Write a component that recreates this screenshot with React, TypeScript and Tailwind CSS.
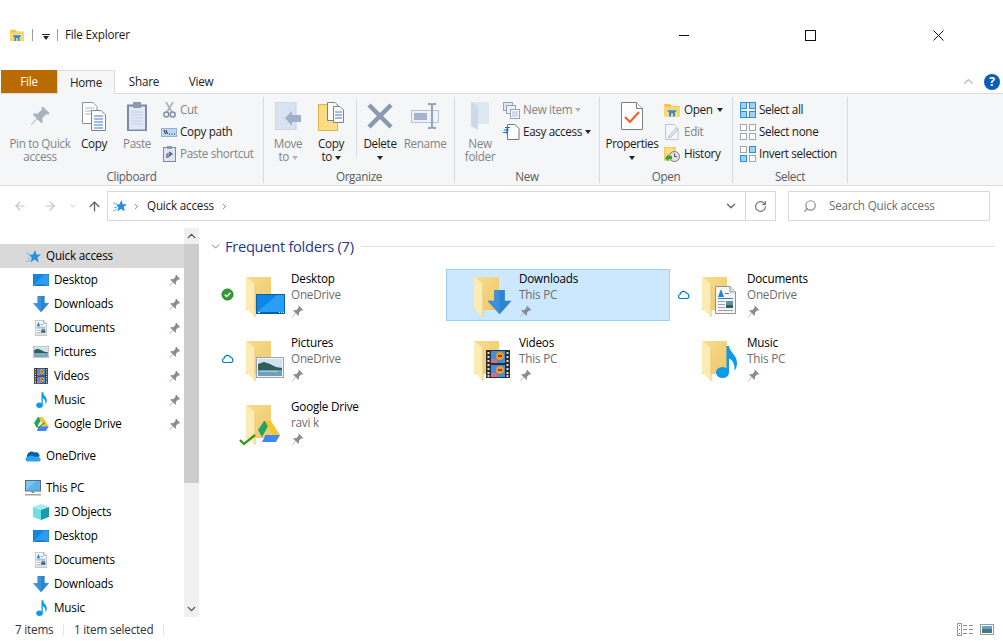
import React from "react";
import { ChevronDown, ChevronUp, RotateCw, Search, ArrowLeft, ArrowRight, ArrowUp } from "lucide-react";

type G = React.SVGProps<SVGSVGElement>;

const Pin = (p: G) => (
  <svg viewBox="0 0 16 16" {...p}>
    <path d="M10 1 L15 6 L14 7 L12.7 6.6 L9.6 9.7 L10 12.2 L9 13.2 L6.1 10.3 L1.6 14.8 L1.2 14.4 L5.7 9.9 L2.8 7 L3.8 6 L6.3 6.4 L9.4 3.3 L9 2 Z" fill={p.fill || "#878d93"} />
  </svg>
);

const Desktop = (p: G) => (
  <svg viewBox="0 0 29 20" preserveAspectRatio="none" {...p}>
    <rect x="0.5" y="0.5" width="28" height="19" fill="#0f86e6" stroke="#0b5fa8" />
    <polygon points="1,18 21,1 28,1 28,18" fill="#2a9df4" />
    <rect x="1" y="18" width="27" height="1" fill="#0b5fa8" />
    <rect x="2" y="18" width="2" height="1" fill="#fff" />
    <rect x="23" y="18" width="1" height="1" fill="#fff" />
    <rect x="25" y="18" width="1" height="1" fill="#fff" />
    <rect x="27" y="18" width="1" height="1" fill="#fff" />
  </svg>
);

const DownArrow = (p: G) => (
  <svg viewBox="0 0 23 24" {...p}>
    <path d="M6.5 0 H16.5 V11 H23 L11.5 24 L0 11 H6.5 Z" fill="#3a92de" stroke="#2a78c0" strokeWidth="0.5" />
    <path d="M11.5 0 H16.5 V11 H23 L11.5 24 Z" fill="#2f84d2" />
  </svg>
);

const Doc = (p: G) => (
  <svg viewBox="0 0 21 28" {...p}>
    <path d="M0.5 0.5 H15 L20.5 6 V27.5 H0.5 Z" fill="#f6f6f6" stroke="#8f9396" />
    <path d="M15 0.5 V6 H20.5" fill="#e2e2e2" stroke="#8f9396" />
    <polygon points="3,11 6,3 9,11" fill="#2a7fd0" />
    <rect x="10" y="7" width="4" height="1" fill="#2a7fd0" />
    <rect x="3" y="12" width="15" height="1" fill="#2a7fd0" />
    <rect x="3" y="15" width="7" height="1" fill="#9aa0a6" />
    <rect x="3" y="18" width="7" height="1" fill="#9aa0a6" />
    <rect x="3" y="21" width="7" height="1" fill="#9aa0a6" />
    <rect x="3" y="24" width="15" height="1" fill="#9aa0a6" />
    <rect x="11" y="15" width="7" height="7" fill="#6c8aa3" />
    <rect x="11" y="19" width="7" height="3" fill="#2f5f5f" />
  </svg>
);

const Picture = (p: G) => (
  <svg viewBox="0 0 28 21" preserveAspectRatio="none" {...p}>
    <rect x="0.5" y="0.5" width="27" height="20" fill="#f4f4f4" stroke="#a3a3a3" />
    <rect x="2" y="2" width="24" height="17" fill="#cfe2f2" />
    <path d="M2 7 L8 5 L14 7 L20 10 L26 11 V13 H2 Z" fill="#2f5f55" />
    <rect x="2" y="13" width="24" height="6" fill="#6f9fc0" />
    <rect x="4" y="14" width="18" height="1" fill="#b3cbdb" />
  </svg>
);

const Film = (p: G) => (
  <svg viewBox="0 0 24 28" {...p}>
    <rect width="24" height="28" fill="#2e2e2e" />
    <rect x="5" y="1" width="14" height="12" fill="#3f8fe0" />
    <rect x="5" y="15" width="14" height="12" fill="#3f8fe0" />
    <circle cx="14" cy="6" r="4" fill="#e8a020" />
    <rect x="12" y="5" width="4" height="2" fill="#b33030" />
    <rect x="5" y="9" width="6" height="4" fill="#d86a9a" />
    <circle cx="14" cy="20" r="4" fill="#e8a020" />
    <rect x="12" y="19" width="4" height="2" fill="#b33030" />
    <rect x="5" y="23" width="6" height="4" fill="#d86a9a" />
    {[2, 6, 10, 14, 18, 22, 25].map((y) => (
      <g key={y}>
        <rect x="1.5" y={y} width="2" height="2" fill="#ddd" />
        <rect x="20.5" y={y} width="2" height="2" fill="#ddd" />
      </g>
    ))}
  </svg>
);

const Note = (p: G) => (
  <svg viewBox="0 0 21 32" {...p}>
    <ellipse cx="6.5" cy="26.5" rx="6.5" ry="5.5" fill="#0a9bea" />
    <path d="M10.5 0 H13 C13.5 6 21 9 21 17 C21 20 20 23 18.5 25 C19 19 17 14 13 12.5 V26 H10.5 Z" fill="#0a9bea" />
  </svg>
);

const Drive = (p: G) => (
  <svg viewBox="0 0 23 21" {...p}>
    <polygon points="7,0 14,0 5,16 1,9" fill="#1fa463" />
    <polygon points="14,0 23,14 15,14 8,0" fill="#f7c52f" />
    <polygon points="5,21 8.5,14 23,14 19,21" fill="#4285f4" />
  </svg>
);

const Check = (p: G) => (
  <svg viewBox="0 0 17 12" {...p}>
    <path d="M1 6 L5 10 L16 1" fill="none" stroke="#3a9a1f" strokeWidth="2.4" />
  </svg>
);

const Star = (p: G) => (
  <svg viewBox="0 0 15 15" {...p}>
    <polygon points="9,1 10.5,5.5 15,5.5 11.5,8.5 12.7,13.5 8.5,10.6 4.5,13.5 5.8,8.8 3,6 7,5.5" fill="#2b8fe0" />
    <path d="M0 4 L5 6 M1 9 L4.5 9 M0 13 L4 11" stroke="#7cc0f0" strokeWidth="1.1" />
  </svg>
);

const Cloud = (p: G) => (
  <svg viewBox="0 0 16 12" {...p}>
    <path d="M2 7 C1.5 3 6 0 9.5 2.5 C12 1.5 15 3.5 14.5 6.5 L8 9 L2 9 Z" fill="#0a5fa8" />
    <path d="M3 11.5 C0 11.5 -0.5 7.5 2.5 7 C4 5.5 8 5 10 7 C13 5.5 16.5 8 15.5 10.5 C15 11.5 14 11.5 13 11.5 Z" fill="#2ba3ef" />
  </svg>
);

const CloudLine = (p: G) => (
  <svg viewBox="0 0 13 11" {...p}>
    <path d="M3.5 9.5 C1 9.5 0.7 6 3 5.5 C3.6 2 8.3 1 9.8 4.5 C12 4.5 13 9.5 9.7 9.5 Z" fill="none" stroke="#0078d7" strokeWidth="1.2" />
  </svg>
);

const Synced = (p: G) => (
  <svg viewBox="0 0 13 13" {...p}>
    <circle cx="6.5" cy="6.5" r="5.5" fill="#2f9e2f" stroke="#1e7e1e" />
    <path d="M3.7 6.7 L5.7 8.6 L9.4 4.8" fill="none" stroke="#fff" strokeWidth="1.4" />
  </svg>
);

const Monitor = (p: G) => (
  <svg viewBox="0 0 16 16" {...p}>
    <rect x="0.5" y="0.5" width="15" height="10.5" fill="#7ec8f6" stroke="#5f6c78" />
    <polygon points="1,10 11,1 15,1 15,10" fill="#5ab4f0" />
    <rect x="6.5" y="11" width="3" height="2" fill="#8a949c" />
    <rect x="0" y="14" width="16" height="1.5" fill="#9aa6b0" />
  </svg>
);

const Cube = (p: G) => (
  <svg viewBox="0 0 16 16" {...p}>
    <polygon points="8,0 16,3 8,6 0,3" fill="#a2ecf0" />
    <polygon points="0,3 8,6 8,16 0,13" fill="#6fdde4" />
    <polygon points="16,3 8,6 8,16 16,13" fill="#1a9bab" />
  </svg>
);

const FolderTile = ({ children }: { children: React.ReactNode }) => (
  <svg width="47" height="44" className="overflow-visible mt-[3px] shrink-0">
    <defs>
      <linearGradient id="fback" x1="0" x2="1" y1="0" y2="1">
        <stop offset="0" stopColor="#f8dd8e" />
        <stop offset="1" stopColor="#eec66a" />
      </linearGradient>
    </defs>
    <rect x="2" y="3" width="25" height="33" fill="url(#fback)" />
    <polygon points="2,3 11,10 11,43 2,34" fill="#fcecb4" />
    <line x1="11" y1="10" x2="11" y2="43" stroke="#e7c878" />
    {children}
  </svg>
);

const smallIcons: Record<string, React.ReactNode> = {
  star: <Star width={15} height={15} />,
  desktop: <Desktop width={16} height={12} />,
  down: <DownArrow width={16} height={16} />,
  doc: <Doc width={12} height={16} />,
  pic: <Picture width={16} height={12} />,
  film: <Film width={14} height={16} />,
  note: <Note width={11} height={16} />,
  drive: (
    <svg width="16" height="16" className="overflow-visible">
      <Drive x={0} y={1} width={16} height={14} />
      <Check x={3} y={6} width={9} height={7} />
    </svg>
  ),
  cloud: <Cloud width={16} height={12} />,
  pc: <Monitor width={16} height={16} />,
  cube: <Cube width={16} height={16} />,
};

const navRows = [
  { label: "Quick access", icon: "star", top: true, active: true },
  { label: "Desktop", icon: "desktop", pin: true },
  { label: "Downloads", icon: "down", pin: true },
  { label: "Documents", icon: "doc", pin: true },
  { label: "Pictures", icon: "pic", pin: true },
  { label: "Videos", icon: "film", pin: true },
  { label: "Music", icon: "note", pin: true },
  { label: "Google Drive", icon: "drive", pin: true, spaced: true },
  { label: "OneDrive", icon: "cloud", top: true, spaced: true },
  { label: "This PC", icon: "pc", top: true },
  { label: "3D Objects", icon: "cube" },
  { label: "Desktop", icon: "desktop" },
  { label: "Documents", icon: "doc" },
  { label: "Downloads", icon: "down" },
  { label: "Music", icon: "note" },
];

type Folder = { name: string; sub: string; selected?: boolean; status?: React.ReactNode; art: React.ReactNode };

const folders: Folder[] = [
  { name: "Desktop", sub: "OneDrive", status: <Synced width={13} height={13} />, art: <Desktop x={12} y={20} width={29} height={20} /> },
  { name: "Downloads", sub: "This PC", selected: true, art: <DownArrow x={16} y={16} width={23} height={24} /> },
  { name: "Documents", sub: "OneDrive", status: <CloudLine width={13} height={11} />, art: <Doc x={15} y={12} width={21} height={28} /> },
  { name: "Pictures", sub: "OneDrive", status: <CloudLine width={13} height={11} />, art: <Picture x={12} y={19} width={28} height={21} /> },
  { name: "Videos", sub: "This PC", art: <Film x={14} y={12} width={24} height={28} /> },
  { name: "Music", sub: "This PC", art: <Note x={16} y={8} width={21} height={32} /> },
  {
    name: "Google Drive",
    sub: "ravi k",
    art: (
      <>
        <Drive x={13} y={19} width={23} height={21} />
        <Check x={-5} y={32} width={17} height={12} />
      </>
    ),
  },
];

const Caret = ({ light }: { light?: boolean }) => (
  <span className={"inline-block w-0 h-0 border-x-[3.5px] border-x-transparent border-t-[4px] align-middle " + (light ? "border-t-[#b5b5b5]" : "border-t-[#222]")} />
);

const BigButton = ({ icon, label, w, ml, off }: { icon: React.ReactNode; label: React.ReactNode; w: string; ml?: string; off?: boolean }) => (
  <div className={"flex flex-col items-center " + w + " " + (ml || "") + (off ? " text-[#838383]" : " text-[#1c1c1c]")}>
    <div className="h-[32px] mt-[3px] flex items-center justify-center">{icon}</div>
    <div className="mt-[5px] text-center leading-[13px] whitespace-nowrap">{label}</div>
  </div>
);

const SmallButton = ({ icon, label, gap, off, caret, iconW }: { icon: React.ReactNode; label: string; gap: string; off?: boolean; caret?: boolean; iconW: string }) => (
  <div className={"h-[22px] flex items-center whitespace-nowrap " + gap + (off ? " text-[#838383]" : " text-[#1c1c1c]")}>
    <span className={"flex justify-center items-center " + iconW}>{icon}</span>
    <span>{label}</span>
    {caret && (
      <span className="flex">
        <Caret light={off} />
      </span>
    )}
  </div>
);

const Group = ({ title, w, children }: { title: string; w: string; children: React.ReactNode }) => (
  <div className={"flex flex-col h-[86px] border-r border-[#dadbdc] " + w}>
    <div className="flex h-[72px] shrink-0">{children}</div>
    <div className="text-center text-[#5b5b5b] leading-[14px] shrink-0">{title}</div>
  </div>
);

const SelectGrid = ({ on }: { on: boolean[] }) => (
  <svg width="16" height="16" viewBox="0 0 16 16">
    {[
      [0, 0],
      [9, 0],
      [0, 9],
      [9, 9],
    ].map(([x, y], i) => (
      <rect key={i} x={x + 0.5} y={y + 0.5} width="6" height="6" fill={on[i] ? "#9fd0f5" : "#fff"} stroke={on[i] ? "#2f8fdc" : "#a5a5a5"} />
    ))}
    {on.every(Boolean) && <rect x="0.5" y="0.5" width="15" height="15" fill="none" stroke="#2f8fdc" />}
  </svg>
);

const OpenFolder = ({ size = 16 }: { size?: number }) => (
  <svg width={size} height={size * 0.85} viewBox="0 0 16 14">
    <path d="M0 1 H6 L8 3 H16 V14 H0 Z" fill="#f6c344" />
    <rect x="0" y="4" width="16" height="10" fill="#fbd873" />
    <path d="M5 14 V9 H3.5 V7.5 H12.5 V9 H11 V14 H9 V10.5 H7 V14 Z" fill="#2d8ae0" />
  </svg>
);

function Ribbon() {
  return (
    <div className="h-[92px] bg-[#f5f6f7] border-b border-[#dadbdc] pt-[3px] flex shrink-0 tracking-[-0.35px]">
      <Group title="Clipboard" w="w-[264px]">
        <BigButton
          w="w-[80px]"
          off
          label={
            <>
              Pin to Quick
              <br />
              access
            </>
          }
          icon={<Pin width={22} height={22} fill="#a9b2c2" />}
        />
        <BigButton
          w="w-[28px]"
          label="Copy"
          icon={
            <svg width="24" height="29" viewBox="0 0 24 29">
              <path d="M0.5 0.5 H11 L15 4.5 V21.5 H0.5 Z" fill="#fff" stroke="#8d9196" />
              <path d="M3 6 H12 M3 9 H12 M3 12 H12" stroke="#9fb4d8" />
              <path d="M9.5 8.5 H19 L23.5 13 V28.5 H9.5 Z" fill="#fff" stroke="#7d8186" />
              <path d="M12 14 H21 M12 17 H21 M12 20 H21 M12 23 H21 M12 26 H21" stroke="#3f78d0" />
            </svg>
          }
        />
        <BigButton
          w="w-[42px]"
          ml="ml-[8px]"
          off
          label="Paste"
          icon={
            <svg width="20" height="29" viewBox="0 0 20 29">
              <rect x="1" y="3.5" width="18" height="25" fill="#e2e9f4" stroke="#7b8aa5" strokeWidth="2" />
              <rect x="6" y="0" width="8" height="6" fill="#8c99b0" />
              <path d="M4 10 H16 M4 13 H16 M4 16 H16 M4 19 H16 M4 22 H16" stroke="#c3cfe2" />
            </svg>
          }
        />
        <div className="ml-[3px] pt-[2px]">
          <SmallButton
            iconW="w-[16px]"
            gap="gap-[3px]"
            off
            label="Cut"
            icon={
              <svg width="13" height="16" viewBox="0 0 13 16">
                <path d="M3 0 L9 10 M10 0 L4 10" stroke="#a3b0c4" strokeWidth="1.6" />
                <circle cx="3.3" cy="12.5" r="2.5" fill="none" stroke="#7f8fa8" strokeWidth="1.4" />
                <circle cx="9.7" cy="12.5" r="2.5" fill="none" stroke="#7f8fa8" strokeWidth="1.4" />
              </svg>
            }
          />
          <SmallButton
            iconW="w-[16px]"
            gap="gap-[3px]"
            label="Copy path"
            icon={
              <svg width="16" height="9" viewBox="0 0 16 9">
                <rect x="0.5" y="0.5" width="15" height="8" fill="#bcd9f2" stroke="#8ab4d8" />
                <path d="M3 2 L4.5 6 M5 2 L6.5 6 M8 6 H9 M10.5 6 H11.5 M13 6 H14" stroke="#222" />
              </svg>
            }
          />
          <SmallButton
            iconW="w-[16px]"
            gap="gap-[3px]"
            off
            label="Paste shortcut"
            icon={
              <svg width="13" height="16" viewBox="0 0 13 16">
                <rect x="0.5" y="1.5" width="12" height="14" fill="#dfe6f2" stroke="#7b8aa5" />
                <rect x="4" y="0" width="5" height="3" fill="#8c99b0" />
                <path d="M4 12 V8 H8 M8 8 L5 11 M6 6 L9 8 L6 10" fill="none" stroke="#52627c" strokeWidth="1.2" />
              </svg>
            }
          />
        </div>
      </Group>

      <Group title="Organize" w="w-[191px]">
        <BigButton
          w="w-[36px]"
          ml="ml-[6px]"
          off
          label={
            <>
              Move
              <br />
              to <Caret light />
            </>
          }
          icon={
            <svg width="26" height="28" viewBox="0 0 26 28">
              <rect x="0" y="0" width="21" height="28" fill="#d9e2f1" stroke="#c3cfe2" />
              <path d="M10 16 L17 9 V13 H26 V20 H17 V24 Z" fill="#9fb1cc" />
            </svg>
          }
        />
        <BigButton
          w="w-[36px]"
          ml="ml-[7px]"
          label={
            <>
              Copy
              <br />
              to <Caret />
            </>
          }
          icon={
            <svg width="26" height="29" viewBox="0 0 26 29">
              <rect x="0.5" y="2.5" width="19" height="26" fill="#fbdc85" stroke="#e0b54a" />
              <path d="M9.5 0.5 H17 L21 4.5 V18.5 H9.5 Z" fill="#fff" stroke="#7d8186" />
              <path d="M15.5 4.5 H22 L25.5 8 V20.5 H15.5 Z" fill="#fff" stroke="#7d8186" />
              <path d="M17 10 H24 M17 13 H24 M17 16 H24" stroke="#3f78d0" />
            </svg>
          }
        />
        <div className="w-px h-[58px] bg-[#dadbdc] ml-[7px] mt-[2px]" />
        <BigButton
          w="w-[36px]"
          ml="ml-[5px]"
          label={
            <>
              Delete
              <br />
              <Caret />
            </>
          }
          icon={
            <svg width="26" height="26" viewBox="0 0 26 26">
              <path d="M2 2 L24 24 M24 2 L2 24" stroke="#8b99b2" strokeWidth="4.5" />
            </svg>
          }
        />
        <BigButton
          w="w-[44px]"
          ml="ml-[5px]"
          off
          label="Rename"
          icon={
            <svg width="28" height="26" viewBox="0 0 28 26">
              <rect x="0.5" y="7.5" width="27" height="12" fill="#eef2f8" stroke="#b7c3d6" />
              <rect x="3" y="10" width="13" height="7" fill="#a5b4cc" />
              <path d="M17 1 H19 Q21 1 21 3 V23 Q21 25 23 25 H25 M25 1 H23 Q21 1 21 3 M21 23 Q21 25 19 25 H17" fill="none" stroke="#94a3ba" strokeWidth="2" />
            </svg>
          }
        />
      </Group>

      <Group title="New" w="w-[145px]">
        <BigButton
          w="w-[36px]"
          ml="ml-[7px]"
          off
          label={
            <>
              New
              <br />
              folder
            </>
          }
          icon={
            <svg width="18" height="28" viewBox="0 0 18 28">
              <rect x="0" y="0" width="18" height="22" fill="#dfe7f3" />
              <polygon points="0,0 7,4 7,28 0,24" fill="#cdd8ea" />
            </svg>
          }
        />
        <div className="ml-[5px] pt-[2px]">
          <SmallButton
            iconW="w-[17px]"
            gap="gap-[3px]"
            off
            caret
            label="New item"
            icon={
              <svg width="17" height="17" viewBox="0 0 17 17">
                <rect x="0.5" y="0.5" width="9" height="8" fill="#dfe6f2" stroke="#95a3ba" />
                <rect x="3.5" y="3.5" width="9" height="8" fill="#eef2f8" stroke="#95a3ba" />
                <rect x="7.5" y="7.5" width="9" height="9" fill="#fff" stroke="#95a3ba" />
                <path d="M9 10 H15 M9 12 H15 M9 14 H15" stroke="#a5b4cc" />
              </svg>
            }
          />
          <SmallButton
            iconW="w-[17px]"
            gap="gap-[3px]"
            caret
            label="Easy access"
            icon={
              <svg width="17" height="16" viewBox="0 0 17 16">
                <path d="M4.5 0.5 H12 L16 4.5 V15.5 H4.5 Z" fill="#fff" stroke="#777" />
                <path d="M2 3.5 H7 M1 6 H6 M0 8.5 H5" stroke="#1f6fc0" />
                <path d="M4 3 V10" stroke="#1f6fc0" />
              </svg>
            }
          />
        </div>
      </Group>

      <Group title="Open" w="w-[133px]">
        <BigButton
          w="w-[56px]"
          ml="ml-[4px]"
          label={
            <>
              Properties
              <br />
              <Caret />
            </>
          }
          icon={
            <svg width="22" height="28" viewBox="0 0 22 28">
              <path d="M0.5 0.5 H15.5 L21.5 6.5 V27.5 H0.5 Z" fill="#fff" stroke="#7d7d7d" />
              <path d="M15.5 0.5 V6.5 H21.5" fill="#eee" stroke="#7d7d7d" />
              <path d="M4 15 L9 20 L18 10" fill="none" stroke="#f0622a" strokeWidth="2.2" />
            </svg>
          }
        />
        <div className="ml-[4px] pt-[2px]">
          <SmallButton iconW="w-[16px]" gap="gap-[4px]" caret label="Open" icon={<OpenFolder />} />
          <SmallButton
            iconW="w-[16px]"
            gap="gap-[4px]"
            off
            label="Edit"
            icon={
              <svg width="14" height="16" viewBox="0 0 14 16">
                <path d="M0.5 0.5 H9 L13 4.5 V15.5 H0.5 Z" fill="#f5f7fb" stroke="#b7c3d6" />
                <path d="M4 12 L11 4 L13 6 L6 13 L3.5 14 Z" fill="#dbe4f2" stroke="#a5b4cc" strokeWidth="0.7" />
              </svg>
            }
          />
          <SmallButton
            iconW="w-[16px]"
            gap="gap-[4px]"
            label="History"
            icon={
              <svg width="16" height="15" viewBox="0 0 16 15">
                <rect x="0" y="0" width="11" height="13" fill="#fbdc85" stroke="#e0b54a" />
                <circle cx="10.5" cy="9.5" r="5" fill="#e2e2e2" stroke="#7a7a7a" />
                <path d="M10.5 6.5 V9.5 H13" fill="none" stroke="#555" />
                <path d="M1 11 L4.5 7 L4.5 9 H8 V12 H4.5 V14.5 Z" fill="#3fa02c" />
              </svg>
            }
          />
        </div>
      </Group>

      <Group title="Select" w="w-[115px]">
        <div className="ml-[7px] pt-[2px]">
          <SmallButton iconW="w-[16px]" gap="gap-[3px]" label="Select all" icon={<SelectGrid on={[true, true, true, true]} />} />
          <SmallButton iconW="w-[16px]" gap="gap-[3px]" label="Select none" icon={<SelectGrid on={[false, false, false, false]} />} />
          <SmallButton iconW="w-[16px]" gap="gap-[3px]" label="Invert selection" icon={<SelectGrid on={[false, true, true, false]} />} />
        </div>
      </Group>
    </div>
  );
}

function Sidebar() {
  return (
    <div className="w-[200px] shrink-0 flex overflow-hidden">
      <div className="w-[184px] pt-[16px]">
        {navRows.map((r, i) => (
          <div
            key={i}
            className={
              "h-[24px] flex items-center gap-[5px] pr-[3px] " +
              (r.top ? "pl-[25px] " : "pl-[33px] ") +
              (r.active ? "bg-[#d9d9d9] " : "") +
              (r.spaced ? "mb-[8px]" : "")
            }
          >
            <span className="w-[16px] h-[16px] flex items-center justify-center shrink-0">{smallIcons[r.icon]}</span>
            <span className="flex-1 whitespace-nowrap">{r.label}</span>
            {r.pin && <Pin width={13} height={13} />}
          </div>
        ))}
      </div>
      <div className="w-[15px] h-[389px] bg-[#f0f0f0] flex flex-col items-center">
        <ChevronUp size={13} strokeWidth={2.5} className="text-[#505050] h-[16px] shrink-0" />
        <div className="w-full h-[239px] bg-[#cdcdcd]" />
        <ChevronDown size={13} strokeWidth={2.5} className="text-[#505050] h-[16px] mt-auto" />
      </div>
    </div>
  );
}

function FolderCard({ f }: { f: Folder }) {
  return (
    <div className={"h-[52px] border flex pl-[2px] pt-px " + (f.selected ? "bg-[#cce8ff] border-[#99d1ff]" : "border-transparent")}>
      <div className="w-[23px] shrink-0 flex items-center pb-[2px]">{f.status}</div>
      <FolderTile>{f.art}</FolderTile>
      <div className="-mt-px">
        <div className="leading-[16px] text-black">{f.name}</div>
        <div className="leading-[16px] text-[#6d6d6d]">{f.sub}</div>
        <div className="h-[18px] flex items-center">
          <Pin width={13} height={13} />
        </div>
      </div>
    </div>
  );
}

export default function App() {
  return (
    <div className="w-[1003px] h-[641px] overflow-hidden bg-white flex flex-col font-['Open_Sans',sans-serif] text-[11.7px] text-black tracking-[-0.2px]">
      {/* title bar */}
      <div className="h-[70px] flex items-center pl-[10px] shrink-0">
        <OpenFolder size={14} />
        <div className="w-px h-[12px] bg-[#9a9a9a] ml-[8px]" />
        <svg width="8" height="6" viewBox="0 0 8 6" className="ml-[9px] mt-[3px]">
          <rect x="0" y="0" width="8" height="1" fill="#222" />
          <polygon points="1,2 7,2 4,6" fill="#222" />
        </svg>
        <div className="w-px h-[12px] bg-[#9a9a9a] ml-[7px]" />
        <span className="ml-[7px] text-[#1a1a1a]">File Explorer</span>
        <div className="ml-auto flex pr-[1px]">
          <div className="w-[124px] flex justify-center">
            <svg width="10" height="10">
              <rect x="0" y="5" width="10" height="1" fill="#111" />
            </svg>
          </div>
          <div className="w-[128px] flex justify-center">
            <svg width="11" height="11">
              <rect x="0.5" y="0.5" width="10" height="10" fill="none" stroke="#111" />
            </svg>
          </div>
          <div className="w-[128px] flex justify-center">
            <svg width="11" height="11">
              <path d="M0.5 0.5 L10.5 10.5 M10.5 0.5 L0.5 10.5" stroke="#111" />
            </svg>
          </div>
        </div>
      </div>

      {/* tabs */}
      <div className="h-[24px] flex border-b border-[#dadbdc] pl-px relative shrink-0">
        <div className="w-[56px] bg-[#b96a00] text-white flex items-center justify-center">File</div>
        <div className="w-[58px] h-[24px] bg-[#f5f6f7] border-x border-t border-[#dadbdc] flex items-center justify-center text-[#222]">Home</div>
        <div className="w-[58px] flex items-center justify-center text-[#222]">Share</div>
        <div className="w-[56px] flex items-center justify-center text-[#222]">View</div>
        <div className="ml-auto flex items-center pr-[3px] gap-[8px]">
          <ChevronUp size={15} className="text-[#b5b5b5]" />
          <div className="w-[16px] h-[16px] rounded-full bg-[#0a5fb4] text-white text-[12px] font-bold flex items-center justify-center">?</div>
        </div>
      </div>

      <Ribbon />

      {/* address row */}
      <div className="h-[42px] flex items-start pt-[5px] pl-[13px] shrink-0">
        <div className="h-[30px] flex items-center text-[#c4c4c4]">
          <ArrowLeft size={14} />
          <ArrowRight size={14} className="ml-[16px]" />
          <ChevronDown size={10} className="ml-[11px]" />
          <ArrowUp size={15} strokeWidth={2.2} className="ml-[9px] text-[#666]" />
        </div>
        <div className="ml-[5px] w-[669px] h-[30px] border border-[#d9d9d9] flex items-center pl-[5px]">
          <Star width={14} height={14} />
          <ChevronDown size={9} className="-rotate-90 ml-[5px] text-[#555]" />
          <span className="ml-[6px] text-[#1a1a1a]">Quick access</span>
          <ChevronDown size={9} className="-rotate-90 ml-[6px] text-[#555]" />
          <ChevronDown size={14} strokeWidth={2.4} className="ml-auto mr-[7px] text-[#666]" />
          <div className="w-[30px] h-full border-l border-[#d9d9d9] flex items-center justify-center">
            <RotateCw size={13} strokeWidth={2.2} className="text-[#777]" />
          </div>
        </div>
        <div className="ml-[12px] w-[202px] h-[30px] border border-[#d9d9d9] flex items-center pl-[14px] text-[#6d6d6d]">
          <Search size={14} className="-scale-x-100 text-[#8a8a8a]" />
          <span className="ml-[12px]">Search Quick access</span>
        </div>
      </div>

      {/* body */}
      <div className="flex-1 flex min-h-0">
        <Sidebar />
        <div className="flex-1 pl-[18px] pt-[8px]">
          <div className="h-[20px] flex items-center -ml-[9px] pr-[8px]">
            <ChevronDown size={13} strokeWidth={1.4} className="text-[#555]" />
            <span className="ml-[3px] text-[14.7px] tracking-[-0.3px] text-[#1e3a8a] whitespace-nowrap">Frequent folders (7)</span>
            <div className="flex-1 h-px bg-[#e2e2e2] ml-[7px]" />
          </div>
          <div className="grid grid-cols-[repeat(3,224px)] gap-x-[4px] gap-y-[12px] mt-[13px]">
            {folders.map((f) => (
              <FolderCard key={f.name} f={f} />
            ))}
          </div>
        </div>
      </div>

      {/* status bar */}
      <div className="h-[21px] flex items-center shrink-0 text-[#333] pl-[15px] pb-[2px]">
        <span className="w-[48px]">7 items</span>
        <div className="w-px h-[12px] bg-[#e6e6e6]" />
        <span className="ml-[10px] w-[89px]">1 item selected</span>
        <div className="w-px h-[12px] bg-[#e6e6e6]" />
        <div className="ml-auto flex items-center gap-[5px] pr-[9px]">
          <svg width="18" height="13" viewBox="0 0 18 13">
            <rect x="0.5" y="0.5" width="4" height="12" fill="#fff" stroke="#9a9a9a" />
            <rect x="2" y="2" width="1" height="1" fill="#666" />
            <rect x="2" y="6" width="1" height="1" fill="#2f8fdc" />
            <rect x="2" y="10" width="1" height="1" fill="#c33" />
            <path d="M6 2.5 H10 M12 2.5 H16 M6 6.5 H10 M12 6.5 H16 M6 10.5 H10 M12 10.5 H16" stroke="#8a8a8a" />
          </svg>
          <svg width="14" height="11" viewBox="0 0 14 11">
            <rect x="0.5" y="0.5" width="13" height="10" fill="#fff" stroke="#9a9a9a" />
            <rect x="2" y="2" width="10" height="3" fill="#5aa3e0" />
            <rect x="2" y="5" width="10" height="4" fill="#4a7a6a" />
          </svg>
        </div>
      </div>
    </div>
  );
}
